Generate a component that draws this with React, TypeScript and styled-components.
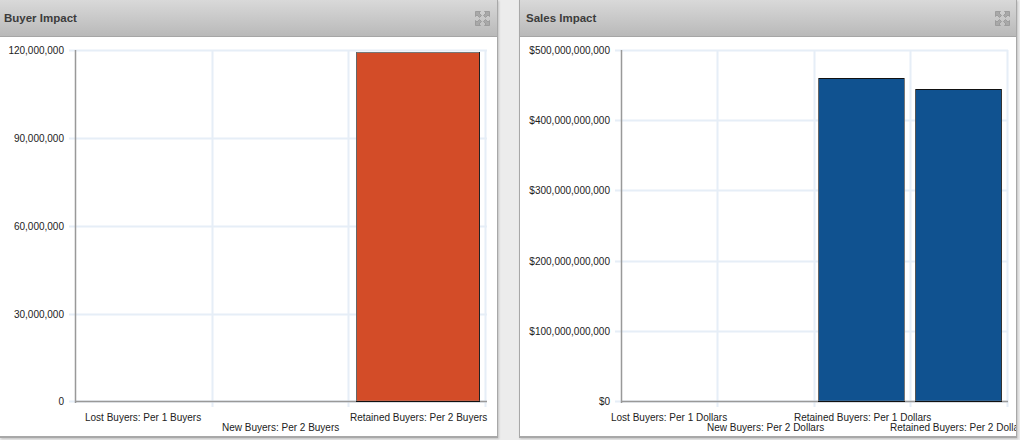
import React from "react";
import styled, { createGlobalStyle } from "styled-components";

const Global = createGlobalStyle`
  html, body { margin: 0; padding: 0; background: #ececec; overflow: hidden; }
  body { font-family: "Liberation Sans", Arial, sans-serif; }
`;

const Page = styled.div`
  width: 1020px;
  height: 440px;
  display: grid;
  grid-template-columns: 498px 498px;
  column-gap: 21px;
  align-items: start;
`;

const Panel = styled.section<{ $flush?: boolean }>`
  height: 438px;
  box-sizing: border-box;
  background: #fff;
  border-style: solid;
  border-color: #a8a8a8;
  border-width: 0 1px 2px ${(p) => (p.$flush ? "0" : "1px")};
  box-shadow: 1px 1px 2px rgba(0, 0, 0, 0.18);
  display: flex;
  flex-direction: column;
  overflow: hidden;
`;

const Header = styled.header<{ $inset: number; $end: number }>`
  height: 37px;
  flex: none;
  box-sizing: border-box;
  border-bottom: 1px solid #a6a6a6;
  background: linear-gradient(#d9d9d9, #b9b9b9);
  display: flex;
  align-items: center;
  justify-content: space-between;
  padding: 0 ${(p) => p.$end}px 0 ${(p) => p.$inset}px;
`;

const Title = styled.h2`
  margin: 0;
  font-size: 11.5px;
  line-height: 14px;
  font-weight: 700;
  color: #3c3c3c;
`;

const Chart = styled.svg`
  display: block;
  flex: none;
`;

const Label = styled.text`
  font-family: "Liberation Sans", Arial, sans-serif;
  font-size: 10px;
  fill: #222;
`;

const Arrow = ({ transform }: { transform?: string }) => (
  <g transform={transform}>
    <path d="M0.5 0.5H5.5L4 2L6.5 4.5L4.5 6.5L2 4L0.5 5.5Z" fill="#a9a9a9" stroke="#969696" strokeWidth="0.8" />
  </g>
);

const ExpandIcon = () => (
  <svg width="15" height="15" viewBox="0 0 15 15" aria-hidden="true">
    <Arrow />
    <Arrow transform="translate(15 0) scale(-1 1)" />
    <Arrow transform="translate(0 15) scale(1 -1)" />
    <Arrow transform="translate(15 15) scale(-1 -1)" />
  </svg>
);

type Bar = { x: number; w: number; top: number; fill: string; topEdge: string; leftEdge: string; rightEdge: string };
type XLabel = { text: string; x: number; y: number };
type ChartSpec = {
  axisX: number;
  endX: number;
  yTicks: { label: string; y: number }[];
  xGrid: number[];
  bars: Bar[];
  xLabels: XLabel[];
};

const OFFSET_Y = 37;
const GRID = "#e6eef7";
const AXIS_Y = 401;

const BarChart = ({ spec, width }: { spec: ChartSpec; width: number }) => (
  <Chart width={width} height={400} viewBox={`0 ${OFFSET_Y} ${width} 400`}>
    {spec.yTicks.map((t) => (
      <g key={t.label}>
        <line x1={spec.axisX - 6} x2={spec.endX} y1={t.y + 0.5} y2={t.y + 0.5} stroke={GRID} strokeWidth={2} />
        <Label x={spec.axisX - 11} y={t.y + 3.5} textAnchor="end">{t.label}</Label>
      </g>
    ))}
    {spec.xGrid.map((x) => (
      <line key={x} x1={x + 0.5} x2={x + 0.5} y1={50} y2={407} stroke={GRID} strokeWidth={2} />
    ))}
    {spec.bars.map((b) => (
      <g key={b.x}>
        <rect x={b.x} y={b.top} width={b.w} height={AXIS_Y - b.top} fill={b.fill} />
        <line x1={b.x} x2={b.x + b.w} y1={b.top + 0.5} y2={b.top + 0.5} stroke={b.topEdge} />
        <line x1={b.x + 0.5} x2={b.x + 0.5} y1={b.top} y2={AXIS_Y} stroke={b.leftEdge} />
        <line x1={b.x + b.w - 0.5} x2={b.x + b.w - 0.5} y1={b.top} y2={AXIS_Y} stroke={b.rightEdge} />
      </g>
    ))}
    <line x1={spec.axisX + 0.5} x2={spec.axisX + 0.5} y1={50} y2={AXIS_Y + 2} stroke="#999" strokeWidth={1.5} />
    <line x1={spec.axisX} x2={spec.endX} y1={AXIS_Y + 0.5} y2={AXIS_Y + 0.5} stroke="#999" strokeWidth={1.5} />
    {spec.bars.map((b) => (
      <line key={b.x} x1={b.x} x2={b.x + b.w} y1={AXIS_Y + 0.5} y2={AXIS_Y + 0.5} stroke="#111" />
    ))}
    {spec.xLabels.map((l) => (
      <Label key={l.text} x={l.x} y={l.y}>{l.text}</Label>
    ))}
  </Chart>
);

const buyer: ChartSpec = {
  axisX: 75,
  endX: 487,
  yTicks: [
    { label: "120,000,000", y: 50 },
    { label: "90,000,000", y: 138 },
    { label: "60,000,000", y: 226 },
    { label: "30,000,000", y: 314 },
    { label: "0", y: 401 },
  ],
  xGrid: [212, 348, 485],
  bars: [{ x: 356, w: 124, top: 52, fill: "#d34c28", topEdge: "#777", leftEdge: "#666", rightEdge: "#222" }],
  xLabels: [
    { text: "Lost Buyers: Per 1 Buyers", x: 85, y: 421 },
    { text: "New Buyers: Per 2 Buyers", x: 222, y: 431 },
    { text: "Retained Buyers: Per 2 Buyers", x: 350, y: 421 },
  ],
};

const sales: ChartSpec = {
  axisX: 101,
  endX: 488,
  yTicks: [
    { label: "$500,000,000,000", y: 50 },
    { label: "$400,000,000,000", y: 120 },
    { label: "$300,000,000,000", y: 190 },
    { label: "$200,000,000,000", y: 261 },
    { label: "$100,000,000,000", y: 331 },
    { label: "$0", y: 401 },
  ],
  xGrid: [197, 294, 390, 487],
  bars: [
    { x: 298, w: 87, top: 78, fill: "#105290", topEdge: "#111", leftEdge: "#666", rightEdge: "#777" },
    { x: 395, w: 87, top: 89, fill: "#105290", topEdge: "#111", leftEdge: "#555", rightEdge: "#333" },
  ],
  xLabels: [
    { text: "Lost Buyers: Per 1 Dollars", x: 91, y: 421 },
    { text: "New Buyers: Per 2 Dollars", x: 187, y: 431 },
    { text: "Retained Buyers: Per 1 Dollars", x: 274, y: 421 },
    { text: "Retained Buyers: Per 2 Dollars", x: 370, y: 431 },
  ],
};

export default function App() {
  return (
    <Page>
      <Global />
      <Panel $flush>
        <Header $inset={4} $end={7}>
          <Title>Buyer Impact</Title>
          <ExpandIcon />
        </Header>
        <BarChart spec={buyer} width={497} />
      </Panel>
      <Panel>
        <Header $inset={6} $end={6}>
          <Title>Sales Impact</Title>
          <ExpandIcon />
        </Header>
        <BarChart spec={sales} width={496} />
      </Panel>
    </Page>
  );
}
